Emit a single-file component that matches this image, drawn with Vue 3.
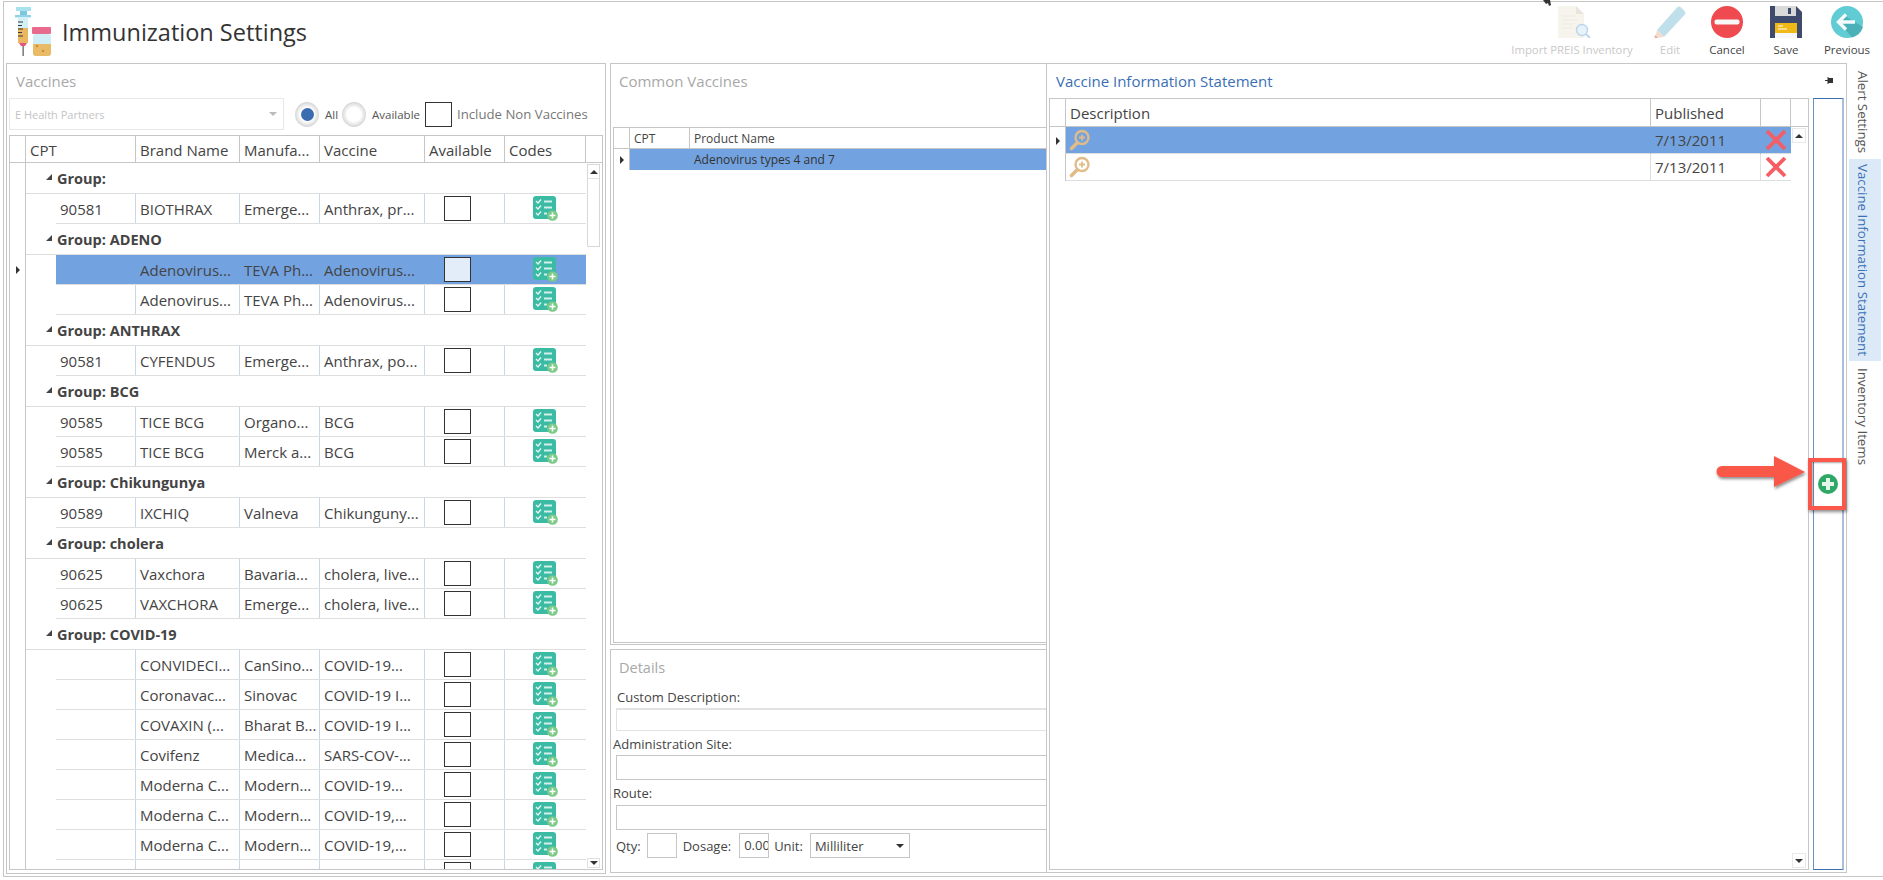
<script setup>
const groups = [
  { name: 'Group:', rows: [['90581', 'BIOTHRAX', 'Emerge...', 'Anthrax, pr...']] },
  { name: 'Group: ADENO', rows: [['', 'Adenovirus...', 'TEVA Ph...', 'Adenovirus...', true], ['', 'Adenovirus...', 'TEVA Ph...', 'Adenovirus...']] },
  { name: 'Group: ANTHRAX', rows: [['90581', 'CYFENDUS', 'Emerge...', 'Anthrax, po...']] },
  { name: 'Group: BCG', rows: [['90585', 'TICE BCG', 'Organo...', 'BCG'], ['90585', 'TICE BCG', 'Merck a...', 'BCG']] },
  { name: 'Group: Chikungunya', rows: [['90589', 'IXCHIQ', 'Valneva', 'Chikunguny...']] },
  { name: 'Group: cholera', rows: [['90625', 'Vaxchora', 'Bavaria...', 'cholera, live...'], ['90625', 'VAXCHORA', 'Emerge...', 'cholera, live...']] },
  { name: 'Group: COVID-19', rows: [
    ['', 'CONVIDECI...', 'CanSino...', 'COVID-19...'],
    ['', 'Coronavac...', 'Sinovac', 'COVID-19 I...'],
    ['', 'COVAXIN (...', 'Bharat B...', 'COVID-19 I...'],
    ['', 'Covifenz', 'Medica...', 'SARS-COV-...'],
    ['', 'Moderna C...', 'Modern...', 'COVID-19...'],
    ['', 'Moderna C...', 'Modern...', 'COVID-19,...'],
    ['', 'Moderna C...', 'Modern...', 'COVID-19,...'],
    ['', 'Moderna C...', 'Modern...', 'COVID-19,...']
  ] }
]
const heads = ['CPT', 'Brand Name', 'Manufa...', 'Vaccine', 'Available', 'Codes', '']
const vis = [true, false]
</script>

<template>
  <div class="page">
    <div class="frame">
      <header class="toolbar">
        <div class="brand">
          <svg class="logo" viewBox="12 6 45 52" width="45" height="52">
            <rect x="16" y="7" width="15" height="4" fill="#a9e2ef" />
            <rect x="20" y="11" width="7" height="5" fill="#7cc7dc" />
            <rect x="15" y="15" width="16" height="2.4" fill="#8fd4e6" />
            <rect x="18" y="17" width="10" height="11" fill="#d3f0f6" />
            <rect x="18" y="28" width="10" height="15" fill="#e9b75f" />
            <path d="M19 43h8l-2 3h-4z" fill="#e3557c" />
            <rect x="22.4" y="46" width="1.5" height="10" fill="#777" />
            <path d="M18 22h5M18 25.5h4M18 29h5M18 32.5h4M18 36h5" stroke="#3a3a3a" stroke-width="1.2" />
            <rect x="32" y="27" width="19" height="7" rx="1" fill="#e86a8c" />
            <rect x="33" y="34" width="18" height="22" rx="3" fill="#cfeef6" />
            <path d="M33 44h18v9a3 3 0 0 1-3 3H36a3 3 0 0 1-3-3z" fill="#eabb66" />
            <circle cx="37" cy="46" r="1.2" fill="#c98a3a" />
            <circle cx="43" cy="51" r="1.2" fill="#c98a3a" />
          </svg>
          <h1 class="title">Immunization Settings</h1>
        </div>
        <div class="actions">
          <div class="action w-import off">
            <svg width="40" height="32" viewBox="0 0 40 32">
              <path d="M6 0h18l8 8v24H6z" fill="#f6f4ed" />
              <path d="M24 0l8 8h-8z" fill="#e8e6dc" />
              <path d="M10 10h14M10 14h16M10 18h12M10 22h10" stroke="#ecebe2" stroke-width="1.2" />
              <circle cx="30" cy="24" r="5.5" fill="#e8f2fa" stroke="#bcd5ea" stroke-width="1.4" />
              <path d="M34 28l4 4" stroke="#bcd5ea" stroke-width="2" />
            </svg>
            <span>Import PREIS Inventory</span>
          </div>
          <div class="action w-edit off">
            <svg width="34" height="32" viewBox="0 0 34 32">
              <path d="M4 24L24 1.500a3 3 0 0 1 4 0l3.500 3.500a3 3 0 0 1 0 4L11 31z" fill="#bfe0ea" />
              <path d="M4 24l7 7-9 1z" fill="#f3dccd" />
              <path d="M2 29l3 3h-3.500z" fill="#e8a8a0" />
            </svg>
            <span>Edit</span>
          </div>
          <div class="action w-cancel">
            <svg width="32" height="32" viewBox="0 0 32 32">
              <circle cx="16" cy="16" r="16" fill="#ee4a4f" />
              <rect x="3.500" y="13.500" width="25" height="5" rx="2" fill="#f8f8f8" />
            </svg>
            <span>Cancel</span>
          </div>
          <div class="action w-save">
            <svg width="32" height="32" viewBox="0 0 32 32">
              <path d="M0 0h26l6 6v26H0z" fill="#3f4a6c" />
              <rect x="5" y="0" width="21" height="10" fill="#d9d9d9" />
              <rect x="18" y="2" width="3" height="6" fill="#3f4a6c" />
              <rect x="5" y="17" width="22" height="15" fill="#f7f7f7" />
              <rect x="5" y="17" width="22" height="10" fill="#efb917" />
              <path d="M8 20h5M8 23h9" stroke="#fff" stroke-width="1.200" />
            </svg>
            <span>Save</span>
          </div>
          <div class="action w-prev">
            <svg width="32" height="32" viewBox="0 0 32 32">
              <circle cx="16" cy="16" r="16" fill="#62ccd4" />
              <path d="M8 16l6-6 18 11a16 16 0 0 1-11 10.500z" fill="#4bb0b8" />
              <path d="M15 8.500L7.500 16l7.500 7.500M8 16h16" fill="none" stroke="#f4fbfb" stroke-width="3.400" />
            </svg>
            <span>Previous</span>
          </div>
        </div>
      </header>

      <main class="main">
        <section class="panel left">
          <div class="panel-title muted">Vaccines</div>
          <div class="filters">
            <div class="combo"><span>E Health Partners</span><i class="combo-arrow"></i></div>
            <span class="radio on"><i></i></span><span class="radio-label first">All</span>
            <span class="radio"><i></i></span><span class="radio-label">Available</span>
            <span class="box big"></span><span class="include">Include Non Vaccines</span>
          </div>
          <div class="vgrid">
            <div class="vhead">
              <div class="hc"></div>
              <div v-for="(h, i) in heads" :key="i" class="hc">{{ h }}</div>
            </div>
            <div class="vbody">
              <div class="vrows">
                <template v-for="g in groups" :key="g.name">
                  <div class="grow">
                    <div class="rh"></div>
                    <div class="gcell"><i class="caret"></i><b>{{ g.name }}</b></div>
                  </div>
                  <div v-for="(r, i) in g.rows" :key="i" class="drow" :class="{ sel: r[4] }">
                    <div class="rh"><i v-if="r[4]" class="mark"></i></div>
                    <div class="dcells">
                      <div class="dc">{{ r[0] }}</div>
                      <div class="dc">{{ r[1] }}</div>
                      <div class="dc">{{ r[2] }}</div>
                      <div class="dc">{{ r[3] }}</div>
                      <div class="dc mid chk"><span class="box"></span></div>
                      <div class="dc mid ico">
                        <svg width="25" height="25" viewBox="0 0 25 25">
                          <rect width="23" height="23" rx="3" fill="#3bbba3" />
                          <path d="M3 5l2 2 3-3.500M3 11l2 2 3-3.500M3 17l2 2 3-3.500" fill="none" stroke="#e6f7f3" stroke-width="1.300" />
                          <path d="M11 5.500h8M11 11.500h8M11 17.500h3" stroke="#d4f0ea" stroke-width="1.800" />
                          <circle cx="19.500" cy="19.500" r="5.300" fill="#7bca88" />
                          <path d="M19.500 16.500v6M16.500 19.500h6" stroke="#fff" stroke-width="1.600" />
                        </svg>
                      </div>
                    </div>
                  </div>
                </template>
              </div>
              <div class="sbar">
                <div class="thumb"><div class="sbtn"><i class="up"></i></div></div>
                <div class="sbtn down"><i class="dn"></i></div>
              </div>
            </div>
          </div>
        </section>

        <div class="center">
          <section class="panel common">
            <div class="panel-title muted tall">Common Vaccines</div>
            <div class="cgrid">
              <div class="chead"><div></div><div>CPT</div><div>Product Name</div></div>
              <div class="crow"><div class="rhc"><i class="mark"></i></div><div class="csel"></div><div class="csel">Adenovirus types 4 and 7</div></div>
            </div>
          </section>
          <section class="panel details">
            <div class="det-title muted">Details</div>
            <label class="lab l1">Custom Description:</label>
            <div class="inp i1"></div>
            <label class="lab l2">Administration Site:</label>
            <div class="inp i2"></div>
            <label class="lab l3">Route:</label>
            <div class="inp i3"></div>
            <div class="qty">
              <span>Qty:</span><div class="mini q"></div>
              <span class="dos">Dosage:</span><div class="mini d"><span>0.00</span></div>
              <span class="unit">Unit:</span>
              <div class="select"><span>Milliliter</span><i class="dn"></i></div>
            </div>
          </section>
        </div>

        <section class="panel right">
          <div class="right-title">
            <span>Vaccine Information Statement</span>
            <svg class="pin" width="10" height="8" viewBox="0 0 10 8">
              <rect x="3" y="1" width="5" height="5" fill="#333" />
              <path d="M0 3.500h3M3 0v7" stroke="#333" stroke-width="1" />
            </svg>
          </div>
          <div class="right-body">
            <div class="vis">
              <div class="vis-head"><div></div><div>Description</div><div>Published</div><div></div><div></div></div>
              <div class="vis-main">
                <div class="vis-rows">
                  <div v-for="(s, i) in vis" :key="i" class="vis-row" :class="{ sel: s }">
                    <div class="rhv"><i v-if="s" class="mark"></i></div>
                    <div class="vc desc">
                      <svg width="22" height="22" viewBox="0 0 22 22">
                        <circle cx="13" cy="8.500" r="6.500" fill="none" stroke="#e2bc88" stroke-width="2.400" />
                        <path d="M13 5.500v6M10 8.500h6" stroke="#e2bc88" stroke-width="1.800" />
                        <path d="M8 14l-5.500 5.500" stroke="#e2bc88" stroke-width="3.600" stroke-linecap="round" />
                      </svg>
                    </div>
                    <div class="vc date">7/13/2011</div>
                    <div class="vc xc">
                      <svg width="22" height="22" viewBox="0 0 22 22">
                        <path d="M2 2l18 18M20 2L2 20" stroke="#f65d64" stroke-width="3.800" />
                      </svg>
                    </div>
                  </div>
                </div>
                <div class="vis-scroll">
                  <div class="sbtn v"><i class="up"></i></div>
                  <div class="sbtn v"><i class="dn"></i></div>
                </div>
              </div>
            </div>
            <div class="strip">
              <svg width="20" height="20" viewBox="0 0 20 20">
                <circle cx="10" cy="10" r="10" fill="#2ea866" />
                <path d="M10 4v12M4 10h12" stroke="#e4f6ec" stroke-width="4" />
              </svg>
            </div>
          </div>
        </section>

        <nav class="tabs">
          <div class="tab t1">Alert Settings</div>
          <div class="tab active">Vaccine Information Statement</div>
          <div class="tab t3">Inventory Items</div>
        </nav>
      </main>
    </div>

    <svg class="cursor" width="12" height="6" viewBox="0 0 12 6"><path d="M3 0l3 4 2-1 1 3 2-1-1-5z" fill="#333" /></svg>

    <svg class="callout" width="136" height="60" viewBox="0 0 136 60">
      <defs>
        <filter id="sh" x="-10%" y="-20%" width="125%" height="150%">
          <feDropShadow dx="1" dy="2" stdDeviation="1.500" flood-color="#000" flood-opacity="0.45" />
        </filter>
      </defs>
      <path filter="url(#sh)" d="M5 10h52V0l31 16-31 15V21H5a5.500 5.500 0 0 1 0-11z" fill="#f9584a" transform="translate(2 0)" />
    </svg>
    <div class="redbox"></div>
  </div>
</template>

<style>
html, body { margin: 0; background: #fff; }
</style>

<style scoped>
.page { position: relative; width: 1883px; height: 880px; overflow: hidden; background: #fff; font-family: "Open Sans", "Noto Sans", sans-serif; color: #444; font-size: 15px; }
.frame { box-sizing: border-box; margin: 1px 0 0 3px; width: 1880px; height: 876px; border: 1px solid #c6c6c6; border-right: none; display: flex; flex-direction: column; }
.toolbar { height: 61px; display: flex; justify-content: space-between; flex: none; }
.brand { display: flex; align-items: flex-start; padding: 4px 0 0 8px; }
.logo { display: block; flex: none; }
.title { margin: 8px 0 0 5px; font-size: 23.500px; font-weight: 500; color: #333; line-height: 36px; white-space: nowrap; }
.actions { display: flex; padding-right: 13px; }
.action { display: flex; flex-direction: column; align-items: center; padding-top: 4px; color: #444; font-size: 11.500px; white-space: nowrap; }
.action span { margin-top: 4px; line-height: 16px; }
.action svg { display: block; }
.action.off { color: #c9c9c9; }
.w-import { width: 124px; font-size: 11.300px; }
.w-edit { width: 72px; }
.w-cancel { width: 42px; }
.w-save { width: 76px; }
.w-prev { width: 46px; }

.main { flex: 1; display: flex; padding: 0 0 2px 2px; min-height: 0; }
.panel { box-sizing: border-box; border: 1px solid #c6c6c6; background: #fff; }
.panel-title { height: 34px; line-height: 34px; font-size: 15px; padding-left: 8px; }
.muted { color: #a8a8a8; }
.left { width: 600px; flex: none; padding: 0 2px 2px; display: flex; flex-direction: column; }
.left .panel-title { padding-left: 7px; }
.filters { display: flex; align-items: center; height: 32px; flex: none; }
.combo { box-sizing: border-box; width: 275px; height: 32px; border: 1px solid #e8e8e8; display: flex; align-items: center; justify-content: space-between; padding: 0 6px 0 5px; font-size: 11px; color: #c4c4c4; }
.combo-arrow { border: 4px solid transparent; border-top: 4px solid #bbb; border-bottom: 0; }
.radio { flex: none; width: 24px; height: 25px; border-radius: 50%; background: radial-gradient(circle, #fff 40%, #d4d4d4 72%, #f0f0f0 100%); display: flex; align-items: center; justify-content: center; }
.radio i { width: 13px; height: 13px; border-radius: 50%; background: #fff; }
.radio.on i { background: #3a6cb0; }
.filters .radio.on { margin-left: 11px; }
.radio-label { font-size: 11.500px; margin-left: 6px; color: #555; white-space: nowrap; }
.radio-label.first { width: 16px; margin-right: 1px; }
.radio-label:not(.first) { width: 46px; margin-left: 6px; }
.box { display: block; box-sizing: border-box; width: 27px; height: 25px; border: 1px solid #333; }
.box.big { flex: none; margin-left: 7px; }
.include { font-size: 13.200px; margin-left: 5px; color: #777; white-space: nowrap; }

.vgrid { box-sizing: border-box; margin-top: 5px; width: 594px; height: 735px; border: 1px solid #c6c6c6; display: flex; flex-direction: column; overflow: hidden; }
.vhead { display: grid; grid-template-columns: 16px 110px 104px 80px 105px 80px 81px 16px; height: 27px; flex: none; box-sizing: border-box; border-bottom: 1px solid #c6c6c6; }
.hc { box-sizing: border-box; border-right: 1px solid #c6c6c6; padding-left: 4px; line-height: 28px; font-size: 15px; white-space: nowrap; overflow: hidden; }
.hc:last-child { border-right: none; }
.vbody { flex: 1; min-height: 0; display: flex; overflow: hidden; }
.vrows { width: 576px; flex: none; overflow: hidden; }
.rh { box-sizing: border-box; width: 16px; flex: none; border-right: 1px solid #c6c6c6; display: flex; align-items: center; justify-content: center; }
.grow { display: flex; height: 31px; }
.gcell { box-sizing: border-box; flex: 1; display: flex; align-items: center; border-bottom: 1px solid #dedede; padding: 1px 0 0 20px; }
.gcell b { font-size: 14.500px; font-weight: 700; margin-left: 5px; color: #444; }
.caret { width: 0; height: 0; border-bottom: 6px solid #444; border-left: 6px solid transparent; margin-top: -4px; }
.drow { display: flex; height: 30px; }
.dcells { box-sizing: border-box; margin-left: 30px; flex: 1; display: grid; grid-template-columns: 80px 104px 80px 105px 80px 81px; border-bottom: 1px solid #dedede; }
.dc { box-sizing: border-box; border-right: 1px solid #c9d6e6; padding-left: 4px; line-height: 30px; font-size: 15px; white-space: nowrap; overflow: hidden; }
.dc:last-child { border-right: none; }
.mid { display: flex; align-items: flex-start; padding: 2px 0 0; }
.chk { padding-left: 19px; }
.ico { padding-left: 28px; }
.mid svg { display: block; }
.sel .dcells { background: #72a2e0; border-bottom-color: #dedede; }
.sel .dc { border-right-color: #72a2e0; }
.sel .box { background: #e3ecf9; }
.mark { width: 0; height: 0; border-left: 4px solid #333; border-top: 4px solid transparent; border-bottom: 4px solid transparent; }

.sbar { flex: 1; display: flex; flex-direction: column; justify-content: space-between; padding: 1px 2px 1px 1px; }
.thumb { box-sizing: border-box; height: 83px; border: 1px solid #d8d8d8; }
.sbtn { box-sizing: border-box; height: 14px; border-bottom: 1px solid #e4e4e4; display: flex; align-items: center; justify-content: center; }
.sbtn.down { border: 1px solid #e0e0e0; height: 10px; }
.up { border: 4px solid transparent; border-bottom: 4px solid #333; border-top: 0; }
.dn { display: block; border: 4px solid transparent; border-top: 4px solid #333; border-bottom: 0; }

.center { width: 436px; flex: none; margin-left: 4px; display: flex; flex-direction: column; height: 810px; }
.common { height: 582px; flex: none; padding: 0 0 1px 2px; display: flex; flex-direction: column; border-right: none; }
.tall { height: 63px; flex: none; padding-left: 6px; }
.cgrid { flex: 1; box-sizing: border-box; border: 1px solid #c6c6c6; border-right: none; font-size: 12px; }
.chead { display: grid; grid-template-columns: 16px 60px 1fr; height: 21px; box-sizing: border-box; border-bottom: 1px solid #c6c6c6; }
.chead div { box-sizing: border-box; border-right: 1px solid #c6c6c6; padding-left: 4px; line-height: 22px; }
.chead div:last-child { border-right: none; }
.crow { display: grid; grid-template-columns: 16px 60px 1fr; height: 21px; }
.rhc { display: flex; align-items: center; justify-content: center; border-right: 1px solid #c6c6c6; }
.csel { background: #72a2e0; line-height: 21px; padding-left: 4px; color: #333; }
.details { margin-top: 4px; height: 224px; flex: none; overflow: hidden; font-size: 13px; border-right: none; }
.det-title { height: 34px; line-height: 35px; font-size: 14.500px; padding-left: 8px; }
.lab { display: block; white-space: nowrap; color: #444; }
.l1 { height: 24px; line-height: 26px; padding-left: 6px; }
.l2 { height: 24px; line-height: 27px; padding-left: 2px; }
.l3 { height: 25px; line-height: 27px; padding-left: 2px; }
.inp { box-sizing: border-box; margin-left: 5px; border: 1px solid #c6c6c6; border-right: none; }
.i1 { height: 23px; border-color: #e2e2e2; border-top-width: 2px; }
.i2 { height: 25px; }
.i3 { height: 25px; }
.qty { display: flex; align-items: center; margin-top: 3px; height: 25px; padding-left: 5px; }
.mini { box-sizing: border-box; height: 25px; border: 1px solid #c6c6c6; overflow: hidden; white-space: nowrap; line-height: 23px; }
.q { width: 30px; margin-left: 6px; }
.dos { margin-left: 6px; }
.d { width: 30px; margin-left: 8px; padding-left: 4px; }
.unit { margin-left: 5px; }
.select { box-sizing: border-box; margin-left: 7px; width: 100px; height: 25px; border: 1px solid #c6c6c6; display: flex; align-items: center; justify-content: space-between; padding: 0 5px 0 4px; }

.right { width: 801px; flex: none; height: 810px; display: flex; flex-direction: column; padding: 0 0 2px 2px; }
.right-title { height: 34px; flex: none; display: flex; justify-content: space-between; align-items: center; color: #3a6fb5; font-size: 15px; padding: 0 11px 0 7px; box-sizing: border-box; }
.pin { display: block; }
.right-body { flex: 1; min-height: 0; display: flex; }
.vis { box-sizing: border-box; width: 760px; flex: none; border: 1px solid #c6c6c6; display: flex; flex-direction: column; }
.vis-head { display: grid; grid-template-columns: 16px 585px 110px 30px 17px; height: 28px; flex: none; box-sizing: border-box; border-bottom: 1px solid #c6c6c6; }
.vis-head div { box-sizing: border-box; border-right: 1px solid #c6c6c6; padding-left: 4px; line-height: 28px; font-size: 15px; }
.vis-head div:last-child { border-right: none; }
.vis-main { flex: 1; display: flex; min-height: 0; }
.vis-rows { width: 741px; flex: none; }
.vis-row { display: grid; grid-template-columns: 16px 585px 110px 30px; height: 27px; }
.rhv { display: flex; align-items: center; justify-content: center; border-right: 1px solid #c6c6c6; }
.vc { box-sizing: border-box; border-bottom: 1px solid #dedede; border-right: 1px solid #dedede; display: flex; align-items: center; }
.vc:last-child { border-right: none; justify-content: center; }
.vis-row.sel .vc { background: #72a2e0; border-right-color: #72a2e0; }
.desc { padding-left: 3px; }
.date { padding-left: 4px; font-size: 15px; }
.vis-scroll { flex: 1; display: flex; flex-direction: column; justify-content: space-between; padding: 1px; }
.sbtn.v { border: 1px solid #e8e8e8; height: 15px; width: 14px; }
.strip { box-sizing: border-box; width: 31px; flex: none; margin-left: 4px; border: 1px solid #a9bfdf; border-left: 1px solid #6c8fc4; border-top: 1px solid #3f6fb3; border-bottom: 1px solid #3f6fb3; border-right: 2px solid #a9bfdf; display: flex; align-items: center; justify-content: center; }
.strip svg { display: block; }

.tabs { flex: none; width: 36px; display: flex; flex-direction: column; }
.tab { writing-mode: vertical-rl; font-size: 13.300px; color: #555; white-space: nowrap; margin-left: 2px; width: 32px; display: flex; align-items: center; justify-content: center; box-sizing: border-box; padding-right: 5px; }
.t1 { height: 96px; padding-top: 3px; }
.active { height: 202px; background: #dceaf8; color: #3a6fb5; }
.t3 { height: 106px; padding-top: 4px; }

.cursor { position: absolute; left: 1540px; top: 0; }
.callout { position: absolute; left: 1715px; top: 456px; }
.redbox { position: absolute; left: 1808px; top: 458px; width: 38px; height: 52px; box-sizing: border-box; border: 4px solid #f9584a; box-shadow: 1px 2px 3px rgba(0,0,0,.45), inset 1px 1px 2px rgba(0,0,0,.35); }
</style>
